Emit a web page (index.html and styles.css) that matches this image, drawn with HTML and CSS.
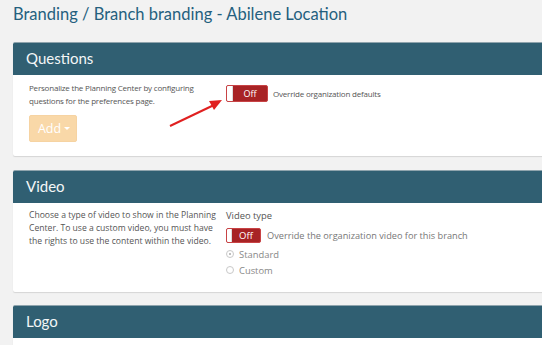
FILE: index.html
```html
<!DOCTYPE html>
<html>
<head>
<meta charset="utf-8">
<link rel="stylesheet" href="styles.css">
</head>
<body>
<div class="page">
  <h1 class="title">Branding / Branch branding - Abilene Location</h1>

  <section class="card card-q">
    <div class="card-head">Questions</div>
    <div class="card-body q-body">
      <div class="col-left">
        <p class="desc q-desc">Personalize the Planning Center by configuring questions for the preferences page.</p>
        <button class="btn-add">Add <span class="caret"></span></button>
      </div>
      <div class="col-right q-right">
        <span class="toggle toggle-lg"><span class="knob"></span><span class="tlabel">Off</span></span>
        <span class="opt-text q-opt">Override organization defaults</span>
      </div>
      <svg class="arrow" width="60" height="32" viewBox="0 0 60 32">
        <line x1="2" y1="29" x2="46" y2="8" stroke="#e02020" stroke-width="2"/>
        <polygon points="54,3 41,4 46,13" fill="#e02020"/>
      </svg>
    </div>
  </section>

  <section class="card card-v">
    <div class="card-head">Video</div>
    <div class="card-body v-body">
      <div class="col-left">
        <p class="desc v-desc">Choose a type of video to show in the Planning Center. To use a custom video, you must have the rights to use the content within the video.</p>
      </div>
      <div class="col-right v-right">
        <div class="field-label">Video type</div>
        <div class="row">
          <span class="toggle toggle-sm"><span class="knob"></span><span class="tlabel">Off</span></span>
          <span class="opt-text v-opt">Override the organization video for this branch</span>
        </div>
        <div class="radio-row first"><span class="radio checked"></span><span class="radio-text">Standard</span></div>
        <div class="radio-row"><span class="radio"></span><span class="radio-text">Custom</span></div>
      </div>
    </div>
  </section>

  <section class="card card-l">
    <div class="card-head">Logo</div>
    <div class="card-body l-body"></div>
  </section>
</div>
</body>
</html>
```

FILE: styles.css
```css
html, body {
  margin: 0;
  padding: 0;
  background: #f2f2f2;
  overflow: hidden;
}
body {
  width: 542px;
  height: 345px;
  font-family: "Open Sans", "Noto Sans", sans-serif;
}
.page {
  padding: 0 0 0 13px;
  width: 529px;
  overflow: hidden;
}
.title {
  margin: 0;
  padding: 4px 0 0 0;
  height: 42px;
  box-sizing: border-box;
  font-family: "Lato", "Open Sans", sans-serif;
  font-weight: 400;
  font-size: 16.5px;
  color: #24607e;
  white-space: nowrap;
}
.card {
  background: #fff;
  border-radius: 2px 0 0 2px;
  box-shadow: 0 1px 1px rgba(0,0,0,0.12);
  margin-bottom: 13px;
  width: 540px;
}
.card-q { margin-bottom: 14px; }
.card-head {
  background: #305f72;
  border-top: 1px solid #8fa4ad;
  border-radius: 2px 0 0 0;
  height: 33px;
  box-sizing: border-box;
  padding: 0 0 0 13px;
  line-height: 31px;
  font-family: "Lato", "Open Sans", sans-serif;
  font-size: 15px;
  color: #f3f6f7;
}
.card-body {
  display: flex;
  position: relative;
  box-sizing: border-box;
}
.q-body { height: 81px; padding: 7px 0 0 16px; }
.v-body { height: 89px; padding: 6px 0 0 16px; }
.l-body { height: 10px; }
.col-left { width: 182px; }
.desc {
  margin: 0;
  color: #555;
}
.q-desc { font-size: 8px; letter-spacing: -0.2px; line-height: 12.5px; width: 180px; }
.v-desc { font-size: 8.6px; line-height: 13px; width: 190px; }
.btn-add {
  margin-top: 8px;
  width: 48px;
  height: 27px;
  border: 1px solid #f6d3a2;
  border-radius: 2px;
  background: #f9d8a8;
  color: #fff;
  font-family: "Open Sans", sans-serif;
  font-size: 12.5px;
  padding: 0 0 1px 2px;
  display: flex;
  align-items: center;
  justify-content: center;
  gap: 3px;
}
.caret {
  display: inline-block;
  width: 0; height: 0;
  border-left: 3px solid transparent;
  border-right: 3px solid transparent;
  border-top: 3px solid #fff;
}
.col-right { margin-left: 15px; }
.q-right {
  display: flex;
  align-items: center;
  height: 17px;
  margin-top: 3px;
}
.toggle {
  display: inline-flex;
  box-sizing: border-box;
  background: #a82325;
  border: 1px solid #c84345;
  border-radius: 2px;
  color: #fff;
  overflow: hidden;
}
.toggle .knob {
  background: #fff;
  border-right: 1px solid #ddd;
}
.toggle .tlabel {
  flex: 1;
  text-align: center;
}
.toggle-lg { width: 42px; height: 17px; font-size: 9px; line-height: 15px; }
.toggle-lg .knob { width: 5px; }
.toggle-sm { width: 35px; height: 15px; font-size: 9.5px; line-height: 13px; }
.toggle-sm .knob { width: 4px; }
.opt-text { color: #555; }
.q-opt { font-size: 8px; letter-spacing: -0.2px; margin-left: 5px; }
.v-right { padding-top: 0; }
.field-label { font-size: 9.4px; color: #555; line-height: 13px; }
.row { display: flex; align-items: center; margin-top: 6px; height: 15px; }
.v-opt { font-size: 9.2px; margin-left: 6px; color: #777; }
.radio-row { display: flex; align-items: center; height: 16px; margin-top: 0; }
.radio-row.first { margin-top: 3px; }
.radio {
  width: 8px; height: 8px;
  box-sizing: border-box;
  border: 1px solid #c8c8c8;
  border-radius: 50%;
  position: relative;
}
.radio.checked::after {
  content: "";
  position: absolute;
  left: 2px; top: 2px;
  width: 2px; height: 2px;
  border-radius: 50%;
  background: #aaa;
}
.radio-text { font-size: 9.4px; color: #888; margin-left: 5px; }
.arrow {
  position: absolute;
  left: 155px;
  top: 22px;
}
```
